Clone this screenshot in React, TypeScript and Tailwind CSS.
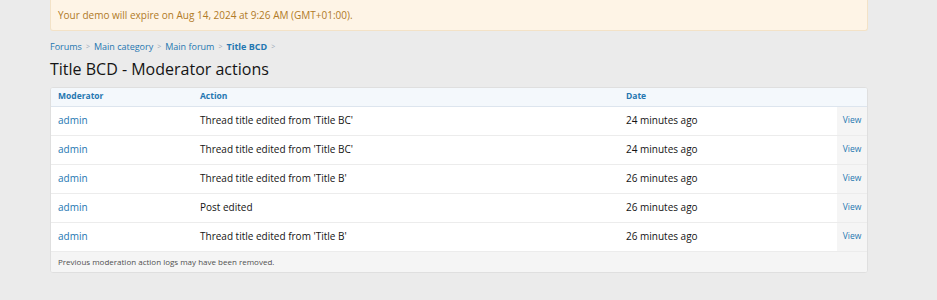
const rows = [
  { action: "Thread title edited from 'Title BC'", date: '24 minutes ago' },
  { action: "Thread title edited from 'Title BC'", date: '24 minutes ago' },
  { action: "Thread title edited from 'Title B'", date: '26 minutes ago' },
  { action: 'Post edited', date: '26 minutes ago' },
  { action: "Thread title edited from 'Title B'", date: '26 minutes ago' },
]

const crumbs = ['Forums', 'Main category', 'Main forum']

export default function App() {
  return (
    <div className="min-h-[300px] bg-[#ebebeb] font-['Open_Sans',sans-serif] text-[#141414]">
      <div className="ml-[50px] w-[818px]">
        <div className="flex h-[31px] items-center rounded-b-[3px] border border-t-0 border-[#f3e2c7] bg-[#fef4e6] px-[7px] text-[10px] text-[#b07a27]">
          Your demo will expire on Aug 14, 2024 at 9:26 AM (GMT+01:00).
        </div>

        <div className="mt-[9px] flex items-center text-[9px] text-[#2577b1]">
          {crumbs.map((c) => (
            <span key={c} className="flex items-center">
              {c}
              <span className="mx-[4px] text-[7px] text-[#9aa9b8]">&gt;</span>
            </span>
          ))}
          <span className="font-bold">Title BCD</span>
          <span className="mx-[4px] text-[7px] text-[#9aa9b8]">&gt;</span>
        </div>

        <h1 className="mt-[3px] text-[16px] leading-[24px] text-[#141414]">
          Title BCD - Moderator actions
        </h1>

        <div className="mt-[6px] overflow-hidden rounded-[3px] border border-[#dfdfdf] bg-white">
          <div className="flex h-[19px] items-center border-b border-[#dde5ee] bg-[#f4f8fc] text-[8.5px] font-bold text-[#2577b1]">
            <div className="w-[149px] pl-[7px]">Moderator</div>
            <div className="w-[426px]">Action</div>
            <div className="flex-1">Date</div>
          </div>
          {rows.map((r, i) => (
            <div
              key={i}
              className="flex h-[29px] items-stretch border-b border-[#ececec] text-[10px]"
            >
              <div className="flex w-[149px] items-center pl-[7px] text-[#2577b1]">admin</div>
              <div className="flex w-[426px] items-center">{r.action}</div>
              <div className="flex flex-1 items-center">{r.date}</div>
              <div className="flex w-[30px] items-center justify-center bg-[#f5f5f5] text-[8.5px] text-[#2577b1]">
                View
              </div>
            </div>
          ))}
          <div className="flex h-[20px] items-center bg-[#f5f5f5] pl-[7px] text-[8px] text-[#505050]">
            Previous moderation action logs may have been removed.
          </div>
        </div>
      </div>
    </div>
  )
}
